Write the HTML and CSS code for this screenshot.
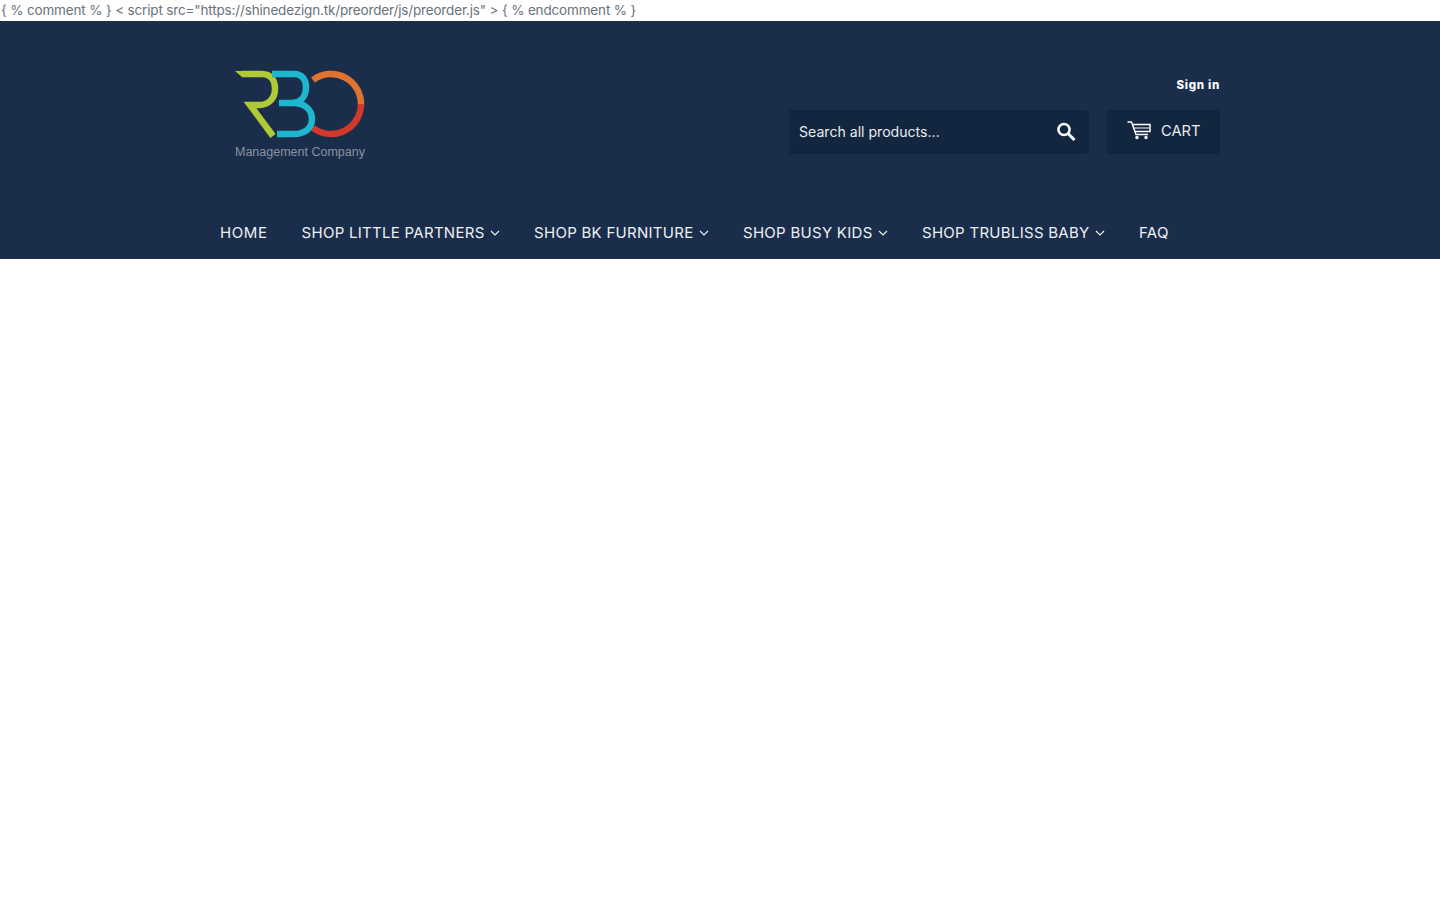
FILE: index.html
```html
<!DOCTYPE html>
<html lang="en">
<head>
    <meta charset="UTF-8">
    <title>RBO Management Company</title>
    <link rel="stylesheet" href="styles.css">
</head>
<body>
    <div class="stray-text">{ % comment % } &lt; script src="https://shinedezign.tk/preorder/js/preorder.js" &gt; { % endcomment % }</div>

    <header class="site-header">
        <div class="header-top">
            <a class="logo" href="#">
                <svg class="logo-mark" width="130" height="70" viewBox="0 0 130 70" fill="none" stroke-width="6.5">
                    <path d="M0 1H8V7H7Z" fill="#afca35"/>
                    <path d="M7 4H27C37 4 40 12 40 19C40 28 34 35 24 35H15L38 66" stroke="#afca35"/>
                    <path d="M37 4H59C68 4 71 11 71 17C71 26 66 33 56 33H44H58C71 33 77 41 77 49C77 59 69 64 59 64H42" stroke="#1fb7cf"/>
                    <path d="M78 10A30 30 0 0 1 126 35" stroke="#df7430"/>
                    <path d="M126 34A30 30 0 0 1 78 58" stroke="#d2392a"/>
                </svg>
                <span class="logo-name">Management Company</span>
            </a>
            <div class="header-tools">
                <a class="sign-in" href="#">Sign in</a>
                <div class="tool-row">
                    <form class="search">
                        <span class="search-text">Search all products...</span>
                        <svg width="20" height="20" viewBox="0 0 20 20" fill="none" stroke="#fff">
                            <circle cx="8" cy="7.5" r="5.6" stroke-width="2.5"/>
                            <path d="M12 11.5L18.5 18" stroke-width="3"/>
                        </svg>
                    </form>
                    <a class="cart" href="#">
                        <svg width="24" height="19" viewBox="0 0 24 19" fill="none" stroke="#fff" stroke-width="1.5">
                            <path d="M0.5 1H4.5L9 13.5H21"/>
                            <path d="M5.5 3.5H23V10.5H8"/>
                            <path d="M7 7H22" stroke-width="1"/>
                            <circle cx="10" cy="16.5" r="1.7" fill="#fff" stroke="none"/>
                            <circle cx="19" cy="16.5" r="1.7" fill="#fff" stroke="none"/>
                        </svg>
                        <span>CART</span>
                    </a>
                </div>
            </div>
        </div>

        <nav class="main-nav">
            <a class="nav-home" href="#">HOME</a>
            <a href="#">SHOP LITTLE PARTNERS <svg class="caret" width="10" height="6" viewBox="0 0 10 6"><path d="M1 1L5 5L9 1"/></svg></a>
            <a href="#">SHOP BK FURNITURE <svg class="caret" width="10" height="6" viewBox="0 0 10 6"><path d="M1 1L5 5L9 1"/></svg></a>
            <a href="#">SHOP BUSY KIDS <svg class="caret" width="10" height="6" viewBox="0 0 10 6"><path d="M1 1L5 5L9 1"/></svg></a>
            <a href="#">SHOP TRUBLISS BABY <svg class="caret" width="10" height="6" viewBox="0 0 10 6"><path d="M1 1L5 5L9 1"/></svg></a>
            <a href="#">FAQ</a>
        </nav>
    </header>
</body>
</html>
```

FILE: styles.css
```css
body {
    margin: 0;
    background-color: #fff;
    font-family: Inter, "Open Sans", sans-serif;
}

a {
    color: inherit;
    text-decoration: none;
}

.stray-text {
    height: 21px;
    padding-left: 1px;
    font-size: 13.5px;
    line-height: 20px;
    letter-spacing: -0.16px;
    color: #69727b;
    white-space: nowrap;
}

.site-header {
    height: 238px;
    box-sizing: border-box;
    padding: 0 220px;
    background-color: #1a2e4c;
    color: #fff;
}

.header-top {
    display: flex;
    justify-content: space-between;
    height: 194px;
}

.logo {
    display: flex;
    flex-direction: column;
    align-items: flex-start;
    padding: 49px 0 0 15px;
}

.logo-mark {
    display: block;
}

.logo-name {
    margin-top: 5px;
    font-family: "Liberation Sans", sans-serif;
    font-size: 12.5px;
    line-height: 14px;
    color: #8b92a0;
}

.header-tools {
    display: flex;
    flex-direction: column;
    align-items: flex-end;
    padding-top: 57px;
}

.sign-in {
    font-size: 11.5px;
    font-weight: 800;
    line-height: 14px;
    letter-spacing: 0.7px;
}

.tool-row {
    display: flex;
    gap: 18px;
    margin-top: 18px;
}

.search {
    display: flex;
    align-items: center;
    justify-content: space-between;
    width: 300px;
    height: 44px;
    box-sizing: border-box;
    padding: 0 13px 0 10px;
    border-radius: 3px;
    background-color: #13263f;
}

.search-text {
    padding-bottom: 2px;
    font-size: 14.1px;
    color: #e8ebef;
}

.cart {
    display: flex;
    align-items: center;
    gap: 10px;
    width: 113px;
    height: 44px;
    box-sizing: border-box;
    padding: 0 0 3px 20px;
    border-radius: 3px;
    background-color: #13263f;
    font-size: 14.7px;
    color: #e8ebef;
}

.main-nav {
    display: flex;
    gap: 34px;
    font-size: 15px;
    line-height: 20px;
    letter-spacing: 0.28px;
    padding-top: 8px;
    color: #eef0f3;
}

.nav-home {
    letter-spacing: 0.6px;
}

.caret {
    margin-left: 1px;
    vertical-align: 2px;
    fill: none;
    stroke: #eef0f3;
    stroke-width: 1.2;
}
```
